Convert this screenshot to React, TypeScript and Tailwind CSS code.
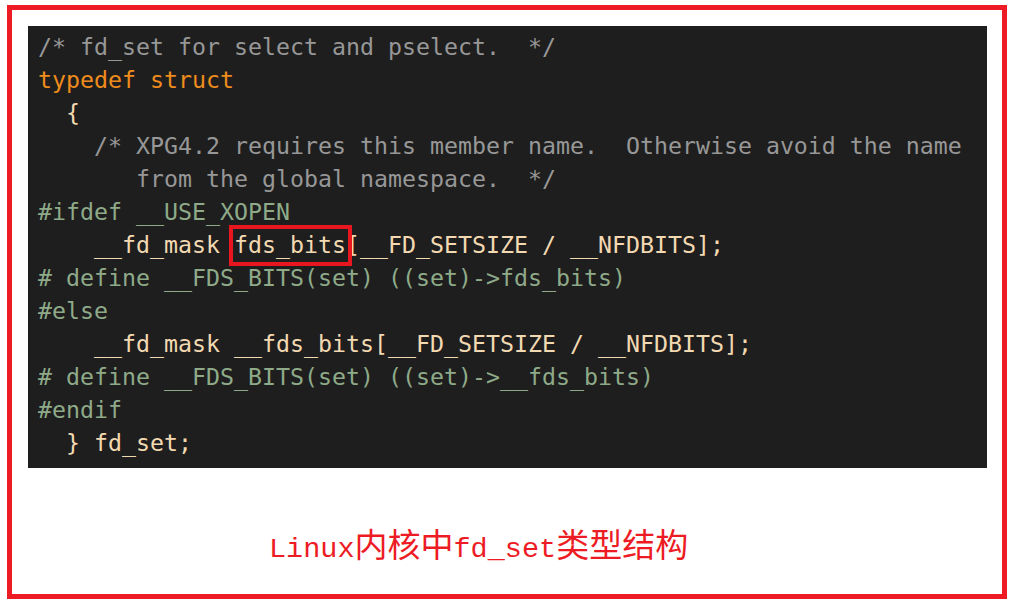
const comment = 'text-[#979797]'
const keyword = 'text-[#ef8c1c]'
const plain = 'text-[#f3d9b1]'
const pre = 'text-[#8eaa89]'

function Line({ children }: { children: React.ReactNode }) {
  return <div className="h-[33px] leading-[33px] whitespace-pre">{children}</div>
}

export default function App() {
  return (
    <div className="w-[1014px] h-[604px] bg-white relative">
      <div className="absolute left-[7px] top-[5px] w-[1000px] h-[594px] border-[5px] border-[#ed1c24] flex flex-col">
        <div
          className="ml-[16px] mt-[16px] w-[959px] h-[442px] bg-[#1e1e1e] pl-[10px] pt-[4px] text-[23.25px]"
          style={{ fontFamily: '"DejaVu Sans Mono", "Liberation Mono", monospace' }}
        >
          <Line><span className={comment}>/* fd_set for select and pselect.  */</span></Line>
          <Line><span className={keyword}>typedef struct</span></Line>
          <Line><span className={plain}>  {'{'}</span></Line>
          <Line><span className={comment}>    /* XPG4.2 requires this member name.  Otherwise avoid the name</span></Line>
          <Line><span className={comment}>       from the global namespace.  */</span></Line>
          <Line><span className={pre}>#ifdef __USE_XOPEN</span></Line>
          <Line>
            <span className={plain}>    __fd_mask </span>
            <span className={`${plain} relative inline-block h-[33px] leading-[33px]`}>
              fds_bits
              <span className="absolute left-[-5px] right-[-6px] top-[-3px] bottom-[-5px] border-[4px] border-[#e8161e]" />
            </span>
            <span className={plain}>[__FD_SETSIZE / __NFDBITS];</span>
          </Line>
          <Line><span className={pre}># define __FDS_BITS(set) ((set)-&gt;fds_bits)</span></Line>
          <Line><span className={pre}>#else</span></Line>
          <Line><span className={plain}>    __fd_mask __fds_bits[__FD_SETSIZE / __NFDBITS];</span></Line>
          <Line><span className={pre}># define __FDS_BITS(set) ((set)-&gt;__fds_bits)</span></Line>
          <Line><span className={pre}>#endif</span></Line>
          <Line><span className={plain}>  {'}'} fd_set;</span></Line>
        </div>
        <div className="flex-1 flex items-center pl-[257px] pt-[30px] text-[#ed1c24]">
          <span className="flex items-baseline leading-none">
            <span className="text-[28.5px]" style={{ fontFamily: '"Liberation Mono", monospace' }}>Linux</span>
            <span className="text-[33px]" style={{ fontFamily: '"Noto Sans CJK SC", sans-serif' }}>内核中</span>
            <span className="text-[28.5px]" style={{ fontFamily: '"Liberation Mono", monospace' }}>fd_set</span>
            <span className="text-[33px]" style={{ fontFamily: '"Noto Sans CJK SC", sans-serif' }}>类型结构</span>
          </span>
        </div>
      </div>
    </div>
  )
}
